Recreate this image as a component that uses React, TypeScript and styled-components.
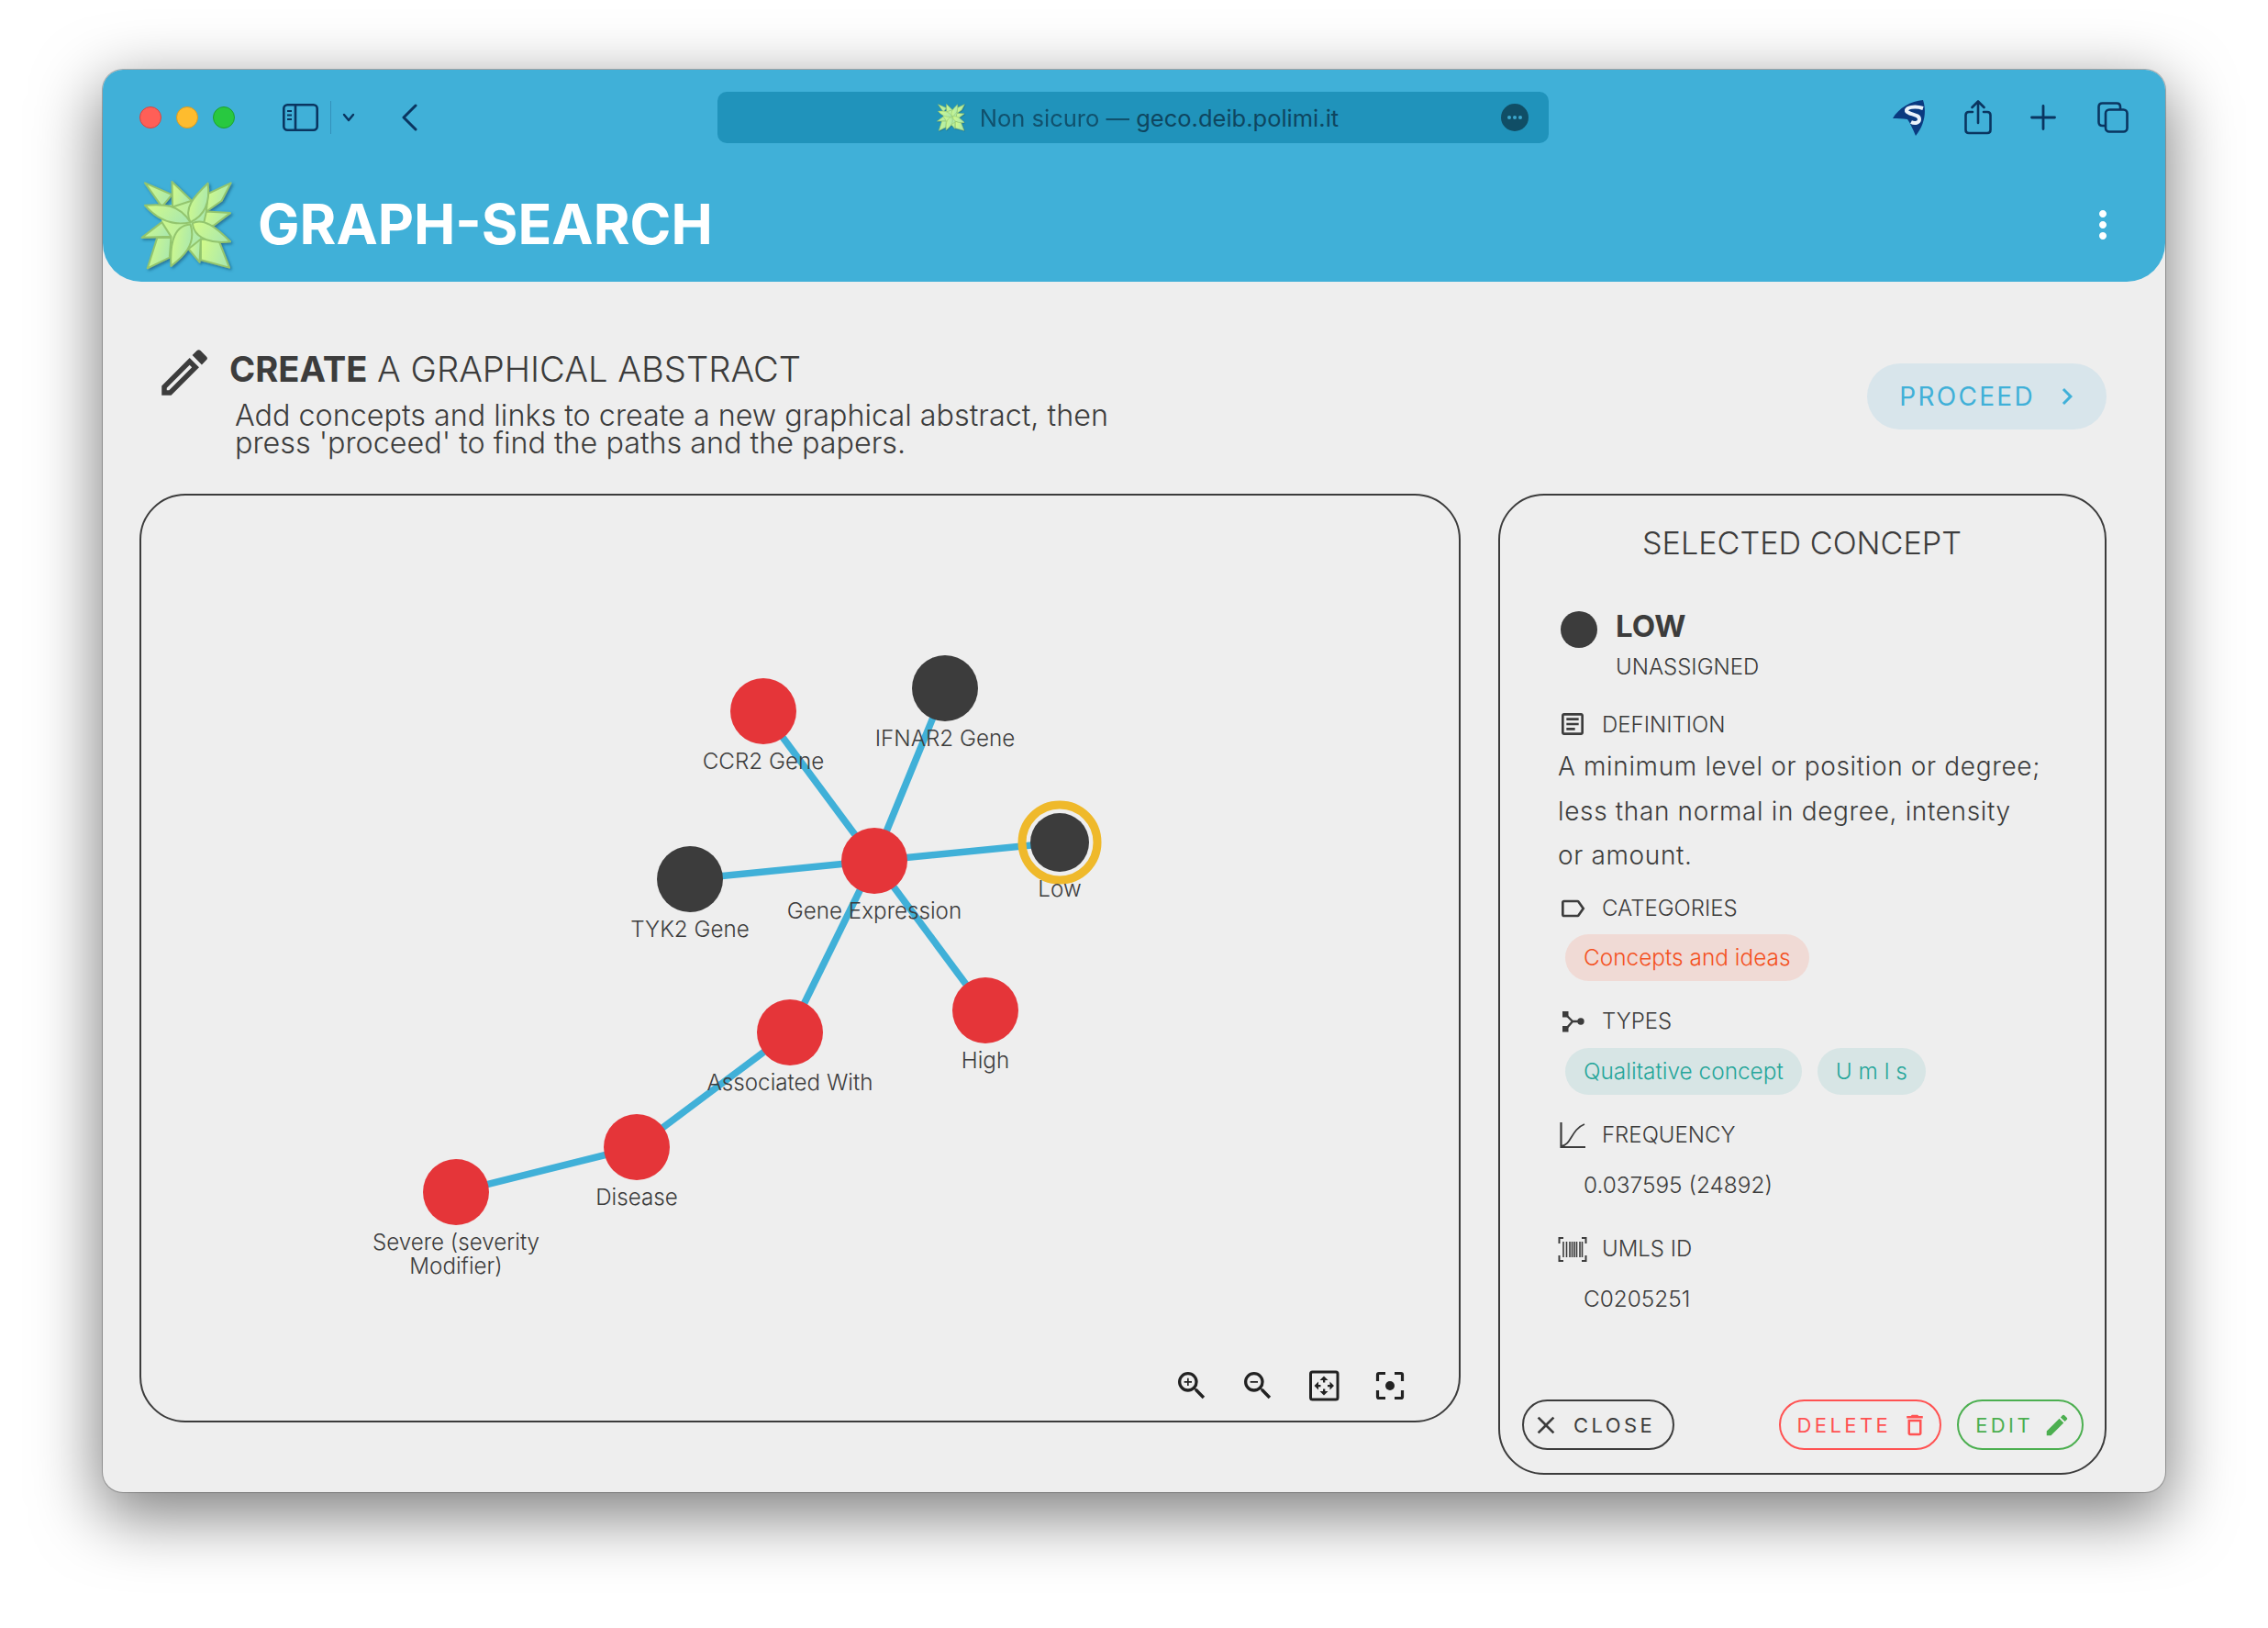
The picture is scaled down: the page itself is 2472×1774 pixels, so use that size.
import styled, { createGlobalStyle } from 'styled-components'
import { MdOutlineEdit, MdEdit, MdChevronRight, MdMoreVert, MdOutlineArticle, MdOutlineLabel, MdClose, MdOutlineDelete, MdZoomIn, MdZoomOut } from 'react-icons/md'

const GlobalStyle = createGlobalStyle`
  html, body {
    margin: 0;
    background: #ffffff;
    font-family: Inter, "Liberation Sans", sans-serif;
    color: #3c3c3c;
  }
`

const Page = styled.div`
  width: 2472px;
  height: 1774px;
  padding: 76px 112px 148px;
  box-sizing: border-box;
  overflow: hidden;
`

const Window = styled.div`
  width: 2248px;
  height: 1550px;
  display: flex;
  flex-direction: column;
  background: #eeeeee;
  border-radius: 22px;
  box-shadow: 0 0 0 1px rgba(0, 0, 0, 0.25), 0 22px 70px 4px rgba(0, 0, 0, 0.5);
`

const Header = styled.header`
  height: 231px;
  flex-shrink: 0;
  display: flex;
  flex-direction: column;
  background: #40b0d8;
  border-radius: 22px 22px 42px 42px;
`

const Toolbar = styled.div`
  height: 104px;
  display: grid;
  grid-template-columns: 670px 906px 1fr;
  align-items: center;
`

const ToolbarLeft = styled.div`
  display: flex;
  align-items: center;
  padding-left: 40px;
`

const Light = styled.span<{ $color: string; $edge: string }>`
  width: 24px;
  height: 24px;
  margin-right: 16px;
  border-radius: 50%;
  box-sizing: border-box;
  background: ${(p) => p.$color};
  border: 1px solid ${(p) => p.$edge};
`

const SidebarButton = styled.span`
  display: flex;
  margin-left: 36px;
`

const ToolbarDivider = styled.span`
  width: 1px;
  height: 36px;
  margin: 0 12px 0 13px;
  background: rgba(10, 53, 96, 0.25);
`

const BackButton = styled.span`
  display: flex;
  margin-left: 51px;
`

const AddressBar = styled.div`
  position: relative;
  height: 56px;
  display: flex;
  align-items: center;
  justify-content: center;
  gap: 16px;
  padding-left: 10px;
  background: #2093bb;
  border-radius: 10px;
  font-size: 25.5px;
  color: #0e4660;
`

const AddressText = styled.span`
  white-space: nowrap;
`

const AddressMuted = styled.span`
  opacity: 0.85;
`

const PageMenu = styled.span`
  position: absolute;
  right: 22px;
  top: 13px;
  width: 30px;
  height: 30px;
  display: flex;
  align-items: center;
  justify-content: center;
  gap: 2px;
  border-radius: 50%;
  background: #104e66;
`

const PageMenuDot = styled.i`
  width: 4px;
  height: 4px;
  border-radius: 50%;
  background: #3ba6cc;
`

const ToolbarRight = styled.div`
  display: flex;
  align-items: center;
  justify-content: flex-end;
  gap: 42px;
  padding-right: 40px;
  & > svg:last-child {
    margin-left: 3px;
  }
`

const AppBar = styled.div`
  flex: 1;
  display: flex;
  align-items: center;
  padding: 3px 44px 0 41px;
  color: #ffffff;
`

const AppTitle = styled.h1`
  flex: 1;
  margin: -2px 0 0 27px;
  font-size: 60.7px;
  font-weight: 700;
  line-height: 72px;
`

const LogoSvg = styled.svg`
  display: block;
  overflow: visible;
  flex-shrink: 0;
`

const Main = styled.main`
  flex: 1;
  display: flex;
  flex-direction: column;
  padding: 66px 64px 20px 40px;
`

const Intro = styled.section`
  height: 165px;
  flex-shrink: 0;
  display: flex;
  align-items: flex-start;
`

const IntroIcon = styled.span`
  display: flex;
  margin-left: 16px;
  font-size: 66px;
`

const IntroText = styled.div`
  flex: 1;
  margin: 6px 0 0 16px;
`

const IntroTitle = styled.h2`
  margin: 0;
  font-size: 38.2px;
  font-weight: 300;
  line-height: 46px;
`

const IntroStrong = styled.strong`
  font-weight: 700;
`

const IntroBody = styled.p`
  margin: 13px 0 0 6px;
  font-size: 32.3px;
  font-weight: 300;
  line-height: 30px;
`

const ProceedButton = styled.button`
  height: 72px;
  margin-top: 23px;
  padding: 0 25px 0 35px;
  display: flex;
  align-items: center;
  gap: 17px;
  border: 0;
  border-radius: 36px;
  background: #d8e5eb;
  color: #40b0d8;
  font: 400 28px Inter, sans-serif;
  letter-spacing: 2.3px;
`

const Content = styled.div`
  display: flex;
  align-items: flex-start;
  gap: 41px;
`

const GraphPanel = styled.section`
  position: relative;
  width: 1440px;
  height: 1012px;
  box-sizing: border-box;
  border: 2px solid #3c3c3c;
  border-radius: 50px;
`

const GraphSvg = styled.svg`
  display: block;
  width: 100%;
  height: 100%;
`

const NodeLabel = styled.text`
  font-family: Inter, sans-serif;
  font-size: 24.2px;
  font-weight: 300;
  fill: #3c3c3c;
  text-anchor: middle;
`

const GraphControls = styled.div`
  position: absolute;
  right: 55px;
  bottom: 18px;
  display: flex;
  gap: 32px;
  font-size: 40px;
  color: #222222;
  & > svg {
    display: block;
  }
`

const DetailPanel = styled.aside`
  width: 663px;
  height: 1069px;
  box-sizing: border-box;
  padding: 32px 23px 25px 24px;
  display: flex;
  flex-direction: column;
  border: 2px solid #3c3c3c;
  border-radius: 50px;
`

const PanelTitle = styled.h3`
  margin: 0;
  padding-right: 2px;
  font-size: 34.2px;
  font-weight: 300;
  line-height: 40px;
  text-align: center;
`

const Section = styled.div<{ $top: number }>`
  margin: ${(p) => p.$top}px 0 0 39px;
`

const ConceptRow = styled(Section)`
  display: flex;
  align-items: flex-start;
  gap: 20px;
`

const ConceptDot = styled.span`
  width: 40px;
  height: 40px;
  margin: 4px 0 0 3px;
  border-radius: 50%;
  background: #3c3c3c;
`

const ConceptName = styled.div`
  font-size: 33px;
  font-weight: 700;
  line-height: 40px;
`

const ConceptKind = styled.div`
  margin-top: 9px;
  font-size: 24px;
  font-weight: 300;
  line-height: 32px;
`

const FieldLabel = styled(Section)`
  height: 32px;
  display: flex;
  align-items: center;
  gap: 16px;
  font-size: 24px;
  font-weight: 300;
  & > svg {
    flex-shrink: 0;
  }
`

const Definition = styled(Section)`
  font-size: 28px;
  font-weight: 300;
  line-height: 48.5px;
  letter-spacing: 0.65px;
`

const ChipRow = styled(Section)`
  display: flex;
  gap: 17px;
  padding-left: 8px;
`

const Chip = styled.span<{ $color: string; $bg: string }>`
  height: 51px;
  padding: 0 20px;
  display: flex;
  align-items: center;
  border-radius: 26px;
  font-size: 24.4px;
  font-weight: 300;
  color: ${(p) => p.$color};
  background: ${(p) => p.$bg};
`

const FieldValue = styled(Section)`
  padding-left: 28px;
  font-size: 24.4px;
  font-weight: 300;
  line-height: 32px;
`

const PanelActions = styled.div`
  margin-top: auto;
  display: flex;
  align-items: center;
  gap: 17px;
`

const ActionButton = styled.button<{ $color: string; $push?: boolean }>`
  height: 55px;
  padding: 0 ${(p) => (p.$push ? 19 : 12)}px 0 ${(p) => (p.$push ? 8 : 18)}px;
  margin-right: ${(p) => (p.$push ? 'auto' : 0)};
  display: flex;
  align-items: center;
  gap: ${(p) => (p.$push ? 14 : 11)}px;
  background: none;
  border: 2px solid ${(p) => p.$color};
  border-radius: 28px;
  color: ${(p) => p.$color};
  font: 400 22px Inter, sans-serif;
  letter-spacing: 3.4px;
`

const links: [string, string][] = [
  ['gene', 'ccr2'],
  ['gene', 'ifnar2'],
  ['gene', 'tyk2'],
  ['gene', 'low'],
  ['gene', 'high'],
  ['gene', 'assoc'],
  ['assoc', 'disease'],
  ['disease', 'severe'],
]

const RED = '#e53539'
const DARK = '#3c3c3c'

const nodes: Record<string, { x: number; y: number; color: string; label: string[]; dy?: number }> = {
  ccr2: { x: 677, y: 234, color: RED, label: ['CCR2 Gene'] },
  ifnar2: { x: 875, y: 209, color: DARK, label: ['IFNAR2 Gene'] },
  gene: { x: 798, y: 397, color: RED, label: ['Gene Expression'] },
  tyk2: { x: 597, y: 417, color: DARK, label: ['TYK2 Gene'] },
  low: { x: 1000, y: 377, color: DARK, label: ['Low'], dy: 59 },
  high: { x: 919, y: 560, color: RED, label: ['High'] },
  assoc: { x: 706, y: 584, color: RED, label: ['Associated With'] },
  disease: { x: 539, y: 709, color: RED, label: ['Disease'] },
  severe: { x: 342, y: 758, color: RED, label: ['Severe (severity', 'Modifier)'], dy: 63 },
}

const Logo = ({ id, width, height }: { id: string; width: number; height: number }) => (
  <LogoSvg width={width} height={height} viewBox="65 50 302 290">
    <defs>
      <linearGradient id={id} x1="0" y1="0" x2="1" y2="0.3">
        <stop offset="0" stopColor="#d4fb88" />
        <stop offset="1" stopColor="#ace9ac" />
      </linearGradient>
      <filter id={id + '-s'} x="-10%" y="-10%" width="125%" height="125%">
        <feDropShadow dx="5" dy="5" stdDeviation="4" floodColor="#0c4a6a" floodOpacity="0.6" />
      </filter>
    </defs>
    <g fill={`url(#${id})`} stroke="#93c56e" strokeWidth="6" strokeLinejoin="round" filter={`url(#${id}-s)`}>
      <path d="M135 135 L232 115 L285 92 L280 150 L268 205 L262 308 L222 272 L165 300 L120 235 L135 185 Z" stroke="none" />
      <path d="M80 57 L168 95 L135 135 Z" />
      <path d="M168 53 L232 115 L170 135 Z" />
      <path d="M360 57 L285 92 L280 150 L330 115 Z" />
      <path d="M358 155 L280 150 L268 205 L305 195 Z" />
      <path d="M70 235 L135 185 L165 232 Z" />
      <path d="M88 335 L120 235 L165 235 L160 300 Z" />
      <path d="M258 315 L222 272 L262 240 Z" />
      <path d="M355 333 L320 243 L262 240 L262 308 Z" />
      <path d="M228 185 C205 140 240 100 285 58 C292 110 282 160 228 185 Z" />
      <path d="M228 185 C190 125 140 125 80 130 C110 165 160 200 228 185 Z" />
      <path d="M235 188 C270 170 310 200 358 248 C310 255 240 245 235 188 Z" />
      <path d="M228 192 C180 195 160 240 165 328 C200 300 250 260 228 192 Z" />
    </g>
  </LogoSvg>
)

const TypesIcon = () => (
  <svg width="32" height="32" viewBox="0 0 32 32" fill="#3c3c3c">
    <rect x="5" y="5" width="6.5" height="6.5" />
    <rect x="5" y="21" width="6.5" height="6.5" />
    <circle cx="25" cy="16" r="3.7" />
    <path d="M9 9 L16 16 L9 24 M16 16 H24" fill="none" stroke="#3c3c3c" strokeWidth="2.4" />
  </svg>
)

const FrequencyIcon = () => (
  <svg width="32" height="32" viewBox="0 0 32 32" fill="none" stroke="#3c3c3c">
    <path d="M3.5 2 V29 H30" strokeWidth="2.2" />
    <path d="M3.5 28 C15 27 14 10 29 4" strokeWidth="1.8" />
  </svg>
)

const BarcodeIcon = () => (
  <svg width="32" height="32" viewBox="0 0 32 32" fill="none" stroke="#3c3c3c" strokeWidth="2">
    <path d="M6 4 H1.5 V10 M26 4 H30.5 V10 M6 29 H1.5 V23 M26 29 H30.5 V23" />
    <path d="M6 8 V25 M9.5 8 V25 M13 8 V25 M15.5 8 V25 M18 8 V25 M20.5 8 V25 M24 8 V25 M26.5 8 V25" strokeWidth="1.6" />
  </svg>
)

const FitIcon = () => (
  <svg width="40" height="40" viewBox="0 0 40 40" fill="#222222">
    <rect x="5.5" y="5" width="29.5" height="30" rx="2" fill="none" stroke="#222222" strokeWidth="3" />
    <path d="M20 9.5 L24.5 14 H21.3 V16.5 H19 V14 H15.5 Z" />
    <path d="M20 30.5 L15.5 26 H19 V23.5 H21.3 V26 H24.5 Z" />
    <path d="M9.5 20 L14 15.5 V19 H16.5 V21.3 H14 V24.5 Z" />
    <path d="M31 20 L26.5 24.5 V21.3 H24 V19 H26.5 V15.5 Z" />
  </svg>
)

const FocusIcon = () => (
  <svg width="40" height="40" viewBox="0 0 40 40" fill="none" stroke="#222222" strokeWidth="3.2">
    <path d="M15 6.5 H8 Q6.5 6.5 6.5 8 V15 M25 6.5 H32 Q33.5 6.5 33.5 8 V15 M15 33.5 H8 Q6.5 33.5 6.5 32 V25 M25 33.5 H32 Q33.5 33.5 33.5 32 V25" />
    <circle cx="20" cy="20" r="5" fill="#222222" stroke="none" />
  </svg>
)

const App = () => {
  return (
    <Page>
      <GlobalStyle />
      <Window>
        <Header>
          <Toolbar>
            <ToolbarLeft>
              <Light $color="#ff5f57" $edge="#d9443f" />
              <Light $color="#febc2e" $edge="#d99a20" />
              <Light $color="#28c840" $edge="#1ea02f" />
              <SidebarButton>
                <svg width="39" height="30" viewBox="0 0 39 30" fill="none" stroke="#0a3560" strokeWidth="2.6">
                  <rect x="1.3" y="1.3" width="36.4" height="27.4" rx="4" />
                  <path d="M14 1.3 V28.7" />
                  <path d="M5 8 H10 M5 12.5 H10 M5 17 H10" strokeWidth="2" />
                </svg>
              </SidebarButton>
              <ToolbarDivider />
              <svg width="14" height="10" viewBox="0 0 14 10" fill="none" stroke="#0a3560" strokeWidth="2.4" strokeLinecap="round" strokeLinejoin="round">
                <path d="M2 2 L7 8 L12 2" />
              </svg>
              <BackButton>
                <svg width="17" height="30" viewBox="0 0 17 30" fill="none" stroke="#0a3560" strokeWidth="3" strokeLinecap="round" strokeLinejoin="round">
                  <path d="M15 2 L2 15 L15 28" />
                </svg>
              </BackButton>
            </ToolbarLeft>
            <AddressBar>
              <Logo id="favicon" width={31} height={30} />
              <AddressText>
                <AddressMuted>Non sicuro — </AddressMuted>geco.deib.polimi.it
              </AddressText>
              <PageMenu>
                <PageMenuDot />
                <PageMenuDot />
                <PageMenuDot />
              </PageMenu>
            </AddressBar>
            <ToolbarRight>
              <svg width="36" height="39" viewBox="0 0 36 39">
                <path d="M0 20 C6 9 20 1 33 0 C37 12 35 27 25 39 C22 32 19 25 16 21 C11 20 5 20 0 20 Z" fill="#0a3a80" />
                <path d="M33 9 C24 6 14 8 15 12 C17 16 29 15 29 21 C29 25 24 26 20 24" fill="none" stroke="#eaf3fb" strokeWidth="4" />
              </svg>
              <svg width="30" height="38" viewBox="0 0 30 38" fill="none" stroke="#0a3560" strokeWidth="2.6" strokeLinecap="round" strokeLinejoin="round">
                <path d="M9 13 H5 Q1.5 13 1.5 16.5 V32.5 Q1.5 36 5 36 H25 Q28.5 36 28.5 32.5 V16.5 Q28.5 13 25 13 H21" />
                <path d="M15 25 V2 M8.5 8 L15 1.5 L21.5 8" />
              </svg>
              <svg width="28" height="28" viewBox="0 0 28 28" stroke="#0a3560" strokeWidth="2.8" strokeLinecap="round">
                <path d="M14 1.5 V26.5 M1.5 14 H26.5" />
              </svg>
              <svg width="34" height="34" viewBox="0 0 34 34" fill="none" stroke="#0a3560" strokeWidth="2.6">
                <path d="M8 26 H5.5 Q1.5 26 1.5 22 V5.5 Q1.5 1.5 5.5 1.5 H21 Q25 1.5 25 5.5 V8" />
                <rect x="9" y="8.5" width="23.5" height="24" rx="4" />
              </svg>
            </ToolbarRight>
          </Toolbar>
          <AppBar>
            <Logo id="logo" width={101} height={97} />
            <AppTitle>GRAPH-SEARCH</AppTitle>
            <MdMoreVert size={48} />
          </AppBar>
        </Header>
        <Main>
          <Intro>
            <IntroIcon>
              <MdOutlineEdit />
            </IntroIcon>
            <IntroText>
              <IntroTitle>
                <IntroStrong>CREATE</IntroStrong> A GRAPHICAL ABSTRACT
              </IntroTitle>
              <IntroBody>
                Add concepts and links to create a new graphical abstract, then
                <br />
                press 'proceed' to find the paths and the papers.
              </IntroBody>
            </IntroText>
            <ProceedButton>
              PROCEED
              <MdChevronRight size={36} />
            </ProceedButton>
          </Intro>
          <Content>
            <GraphPanel>
              <GraphSvg viewBox="-1 -1 1436 1008">
                {links.map(([a, b]) => (
                  <line key={a + b} x1={nodes[a].x} y1={nodes[a].y} x2={nodes[b].x} y2={nodes[b].y} stroke="#40b0d8" strokeWidth="7.5" />
                ))}
                <circle cx={nodes.low.x} cy={nodes.low.y} r="41" fill="none" stroke="#efb92b" strokeWidth="9" />
                {Object.entries(nodes).map(([key, n]) => (
                  <g key={key}>
                    <circle cx={n.x} cy={n.y} r={key === 'low' ? 32 : 36} fill={n.color} />
                    {n.label.map((line, i) => (
                      <NodeLabel key={line} x={n.x} y={n.y + (n.dy ?? 63) + i * 26}>
                        {line}
                      </NodeLabel>
                    ))}
                  </g>
                ))}
              </GraphSvg>
              <GraphControls>
                <MdZoomIn />
                <MdZoomOut />
                <FitIcon />
                <FocusIcon />
              </GraphControls>
            </GraphPanel>
            <DetailPanel>
              <PanelTitle>SELECTED CONCEPT</PanelTitle>
              <ConceptRow $top={50}>
                <ConceptDot />
                <div>
                  <ConceptName>LOW</ConceptName>
                  <ConceptKind>UNASSIGNED</ConceptKind>
                </div>
              </ConceptRow>
              <FieldLabel $top={30}>
                <MdOutlineArticle size={32} />
                DEFINITION
              </FieldLabel>
              <Definition $top={6}>
                A minimum level or position or degree;
                <br />
                less than normal in degree, intensity
                <br />
                or amount.
              </Definition>
              <FieldLabel $top={17}>
                <MdOutlineLabel size={32} />
                CATEGORIES
              </FieldLabel>
              <ChipRow $top={12}>
                <Chip $color="#f4511e" $bg="#f0dad5">Concepts and ideas</Chip>
              </ChipRow>
              <FieldLabel $top={28}>
                <TypesIcon />
                TYPES
              </FieldLabel>
              <ChipRow $top={13}>
                <Chip $color="#26a69a" $bg="#d7e5e5">Qualitative concept</Chip>
                <Chip $color="#26a69a" $bg="#d7e5e5">U m l s</Chip>
              </ChipRow>
              <FieldLabel $top={28}>
                <FrequencyIcon />
                FREQUENCY
              </FieldLabel>
              <FieldValue $top={22}>0.037595 (24892)</FieldValue>
              <FieldLabel $top={38}>
                <BarcodeIcon />
                UMLS ID
              </FieldLabel>
              <FieldValue $top={22}>C0205251</FieldValue>
              <PanelActions>
                <ActionButton $color="#3c3c3c" $push>
                  <MdClose size={32} />
                  CLOSE
                </ActionButton>
                <ActionButton $color="#ff5252">
                  DELETE
                  <MdOutlineDelete size={30} />
                </ActionButton>
                <ActionButton $color="#4caf50">
                  EDIT
                  <MdEdit size={30} />
                </ActionButton>
              </PanelActions>
            </DetailPanel>
          </Content>
        </Main>
      </Window>
    </Page>
  )
}

export default App
